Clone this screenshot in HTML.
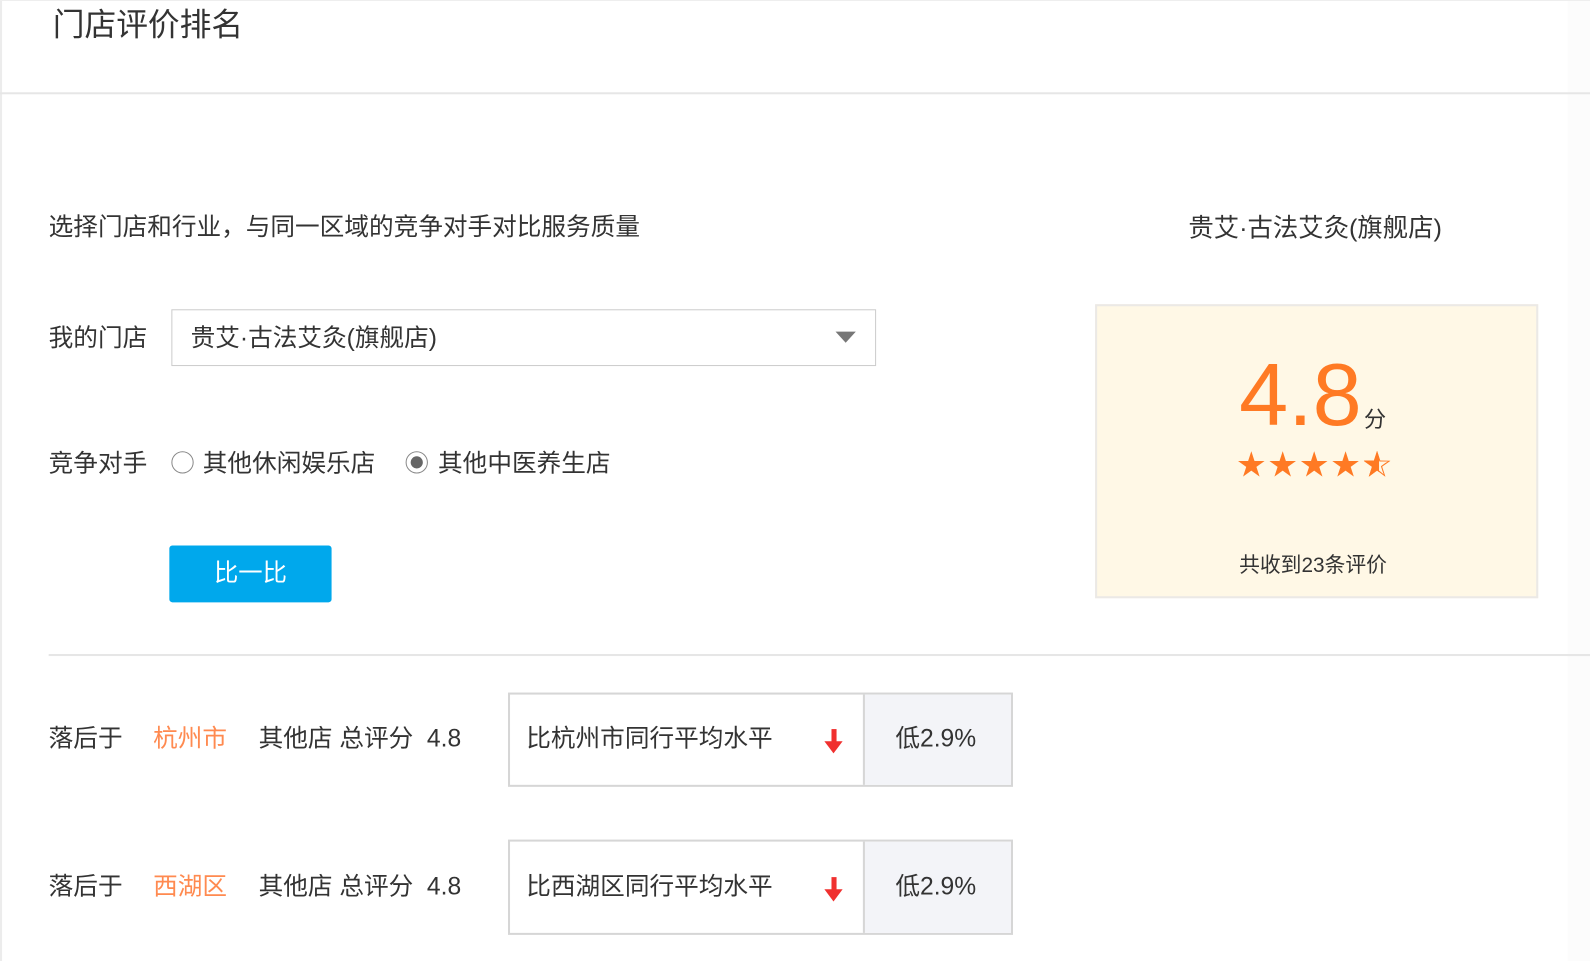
<!DOCTYPE html>
<html><head><meta charset="utf-8">
<style>
*{margin:0;padding:0;box-sizing:border-box}
body{width:1590px;height:948px;background:#fff;font-family:"Liberation Sans","Noto Sans CJK SC",sans-serif;color:#333;position:relative;overflow:hidden}
#w{position:absolute;left:0;top:0;width:1568px;height:935px;transform:scale(1.014);transform-origin:0 0}
.a{position:absolute;white-space:nowrap}
.t{font-size:24.3px;line-height:28px}
</style></head><body>
<div class="a" style="left:1568px;top:0;width:22px;height:948px;background:#fcfcfc"></div>
<div id="w">
<div class="a" style="left:0;top:0;width:2px;height:948px;background:#ececec"></div>
<div class="a" style="left:1546px;top:0;width:30px;height:948px;background:#fcfcfc"></div>
<div class="a" style="left:0;top:0;width:1590px;height:1px;background:#eee"></div>
<div class="a" style="left:52px;top:7px;font-size:31.3px;line-height:36px;color:#333">门店评价排名</div>
<div class="a" style="left:0;top:91px;width:1590px;height:2px;background:#e6e6e6"></div>

<div class="a t" style="left:48px;top:211px">选择门店和行业，与同一区域的竞争对手对比服务质量</div>
<div class="a t" style="left:1172px;top:211px;font-size:25px">贵艾·古法艾灸(旗舰店)</div>

<div class="a t" style="left:48px;top:320px">我的门店</div>
<div class="a" style="left:169px;top:305px;width:695px;height:56px;border:1px solid #ccc;background:#fff"></div>
<div class="a t" style="left:188px;top:320px">贵艾·古法艾灸(旗舰店)</div>
<div class="a" style="left:824px;top:327px;width:0;height:0;border-left:10px solid transparent;border-right:10px solid transparent;border-top:11px solid #777"></div>

<div class="a t" style="left:48px;top:444px">竞争对手</div>
<div class="a" style="left:169px;top:445px;width:22px;height:22px;border:1px solid #888;border-radius:50%"></div>
<div class="a t" style="left:200px;top:444px">其他休闲娱乐店</div>
<div class="a" style="left:400px;top:445px;width:22px;height:22px;border:1px solid #888;border-radius:50%;background:#fff"></div>
<div class="a" style="left:405px;top:450px;width:12px;height:12px;border-radius:50%;background:#666"></div>
<div class="a t" style="left:432px;top:444px">其他中医养生店</div>

<div class="a" style="left:167px;top:538px;width:160px;height:56px;background:#00a8ec;border-radius:3px;color:#fff;font-size:24px;line-height:56px;text-align:center">比一比</div>

<div class="a" style="left:1080px;top:300px;width:437px;height:290px;background:#fff8e6;border:2px solid #ebe9e6"></div>
<div class="a" style="left:1222px;top:340px;font-size:87px;line-height:100px;color:#ff7a24">4.8</div>
<div class="a" style="left:1345px;top:400px;font-size:22px;line-height:28px;color:#333">分</div>
<div class="a" style="left:1220px;top:443px;font-size:28px;line-height:32px;color:#ff7a24;letter-spacing:3px">★★★★<span style="position:relative;display:inline-block">☆<span style="position:absolute;left:0;top:0;width:50%;overflow:hidden">★</span></span></div>
<div class="a" style="left:1222px;top:545px;font-size:20.5px;line-height:26px;color:#333">共收到23条评价</div>

<div class="a" style="left:48px;top:645px;width:1542px;height:2px;background:#e6e6e6"></div>

<div class="a t" style="left:48px;top:715px">落后于</div>
<div class="a t" style="left:151px;top:715px;color:#ff8a50">杭州市</div>
<div class="a t" style="left:255px;top:715px">其他店 总评分&nbsp;&nbsp;4.8</div>
<div class="a" style="left:501px;top:683px;width:498px;height:93px;border:2px solid #d6d6d6;background:#fff"></div>
<div class="a" style="left:851px;top:685px;width:146px;height:89px;background:#f3f4f8;border-left:2px solid #d6d6d6"></div>
<div class="a t" style="left:519px;top:715px">比杭州市同行平均水平</div>
<div class="a" style="left:820px;top:719px;width:5px;height:14px;background:#f0302f"></div>
<div class="a" style="left:813px;top:731px;border-left:9px solid transparent;border-right:9px solid transparent;border-top:12px solid #f0302f"></div>
<div class="a t" style="left:883px;top:715px">低2.9%</div>

<div class="a t" style="left:48px;top:861px">落后于</div>
<div class="a t" style="left:151px;top:861px;color:#ff8a50">西湖区</div>
<div class="a t" style="left:255px;top:861px">其他店 总评分&nbsp;&nbsp;4.8</div>
<div class="a" style="left:501px;top:828px;width:498px;height:94px;border:2px solid #d6d6d6;background:#fff"></div>
<div class="a" style="left:851px;top:830px;width:146px;height:90px;background:#f3f4f8;border-left:2px solid #d6d6d6"></div>
<div class="a t" style="left:519px;top:861px">比西湖区同行平均水平</div>
<div class="a" style="left:820px;top:865px;width:5px;height:14px;background:#f0302f"></div>
<div class="a" style="left:813px;top:877px;border-left:9px solid transparent;border-right:9px solid transparent;border-top:12px solid #f0302f"></div>
<div class="a t" style="left:883px;top:861px">低2.9%</div>
</div>
</body></html>
